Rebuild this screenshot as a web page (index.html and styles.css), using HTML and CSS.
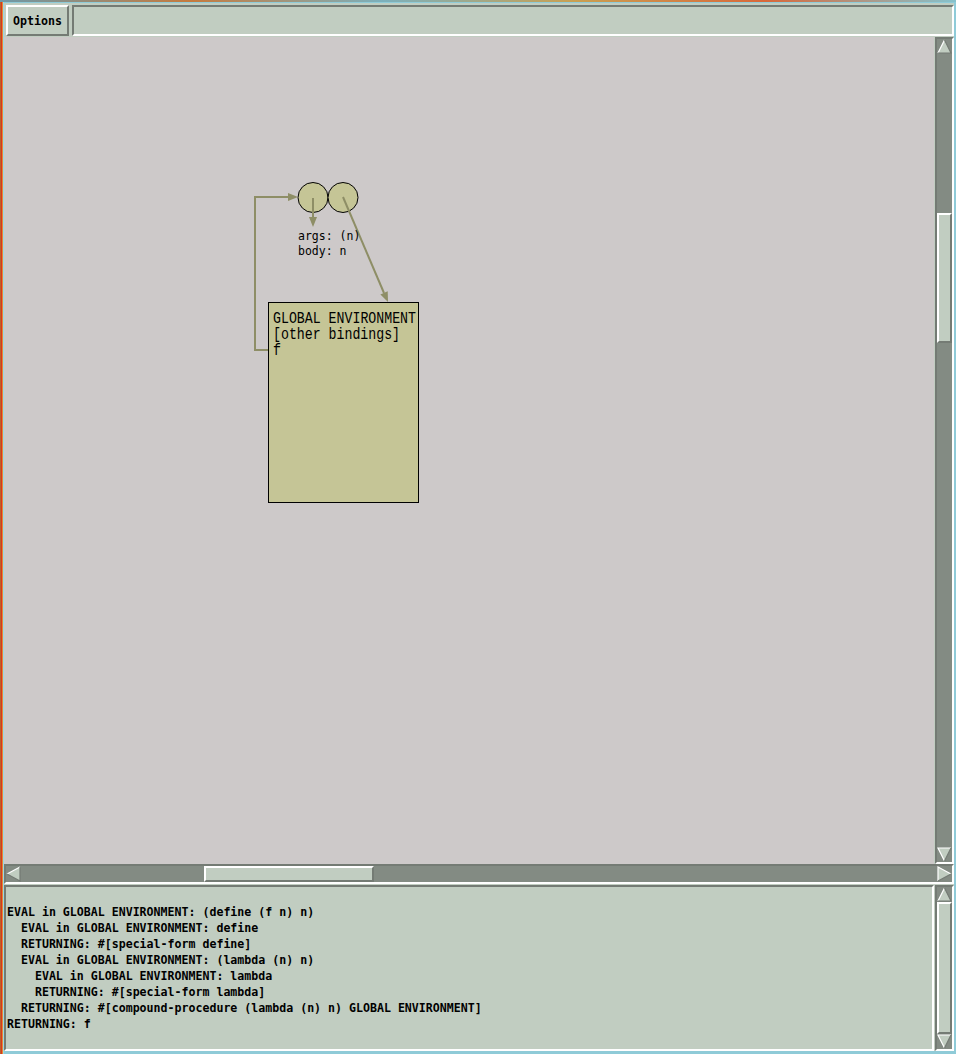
FILE: index.html
```html
<!DOCTYPE html>
<html>
<head>
<meta charset="utf-8">
<title>Environment diagram</title>
<link rel="stylesheet" href="styles.css">
</head>
<body>
<div class="window">
  <div class="topbar">
    <div class="btn">Options</div>
    <div class="entry"></div>
  </div>
  <div class="main">
    <div class="canvas">
      <svg class="diagram" width="930" height="827" viewBox="4 37 930 827">
        <rect class="frame" x="268.5" y="302.5" width="150" height="200"/>
        <circle class="cell" cx="313" cy="197.5" r="15"/>
        <circle class="cell" cx="343" cy="197.5" r="15"/>
        <line class="ptr" x1="313" y1="198" x2="313" y2="218"/>
        <polygon class="head" points="309,217 317,217 313,227"/>
        <line class="ptr" x1="343" y1="197" x2="384" y2="293"/>
        <polygon class="head" points="380.4,294.4 387.7,291.2 388,302"/>
        <polyline class="ptr" points="268,350 255,350 255,197 289,197"/>
        <polygon class="head" points="288,193 288,201 298,197"/>
        <text class="lbl" x="298" y="240">args: (n)</text>
        <text class="lbl" x="298" y="255">body: n</text>
        <text class="env" x="273" y="323" textLength="143" lengthAdjust="spacingAndGlyphs">GLOBAL ENVIRONMENT</text>
        <text class="env" x="273" y="339" textLength="127" lengthAdjust="spacingAndGlyphs">[other bindings]</text>
        <text class="env" x="273" y="355" textLength="8" lengthAdjust="spacingAndGlyphs">f</text>
      </svg>
    </div>
    <div class="vscroll">
      <svg class="arrow" width="15" height="15" viewBox="0 0 15 15"><polygon class="af" points="7.5,1 1,14 14,14"/><polyline class="al" points="1,14 7.5,1"/><polyline class="ad" points="7.5,1 14,14 1,14"/></svg>
      <div class="track"><div class="thumb vthumb"></div></div>
      <svg class="arrow" width="15" height="15" viewBox="0 0 15 15"><polygon class="af" points="1,1 14,1 7.5,14"/><polyline class="al" points="7.5,14 1,1 14,1"/><polyline class="ad" points="14,1 7.5,14"/></svg>
    </div>
  </div>
  <div class="hscroll">
    <svg class="arrow" width="15" height="16" viewBox="0 0 15 16"><polygon class="af" points="1,8 14,1 14,15"/><polyline class="al" points="1,8 14,1"/><polyline class="ad" points="14,1 14,15 1,8"/></svg>
    <div class="htrack"><div class="thumb hthumb"></div></div>
    <svg class="arrow" width="15" height="16" viewBox="0 0 15 16"><polygon class="af" points="1,1 14,8 1,15"/><polyline class="al" points="1,15 1,1 14,8"/><polyline class="ad" points="14,8 1,15"/></svg>
  </div>
  <div class="console">
<pre class="trace">EVAL in GLOBAL ENVIRONMENT: (define (f n) n)
  EVAL in GLOBAL ENVIRONMENT: define
  RETURNING: #[special-form define]
  EVAL in GLOBAL ENVIRONMENT: (lambda (n) n)
    EVAL in GLOBAL ENVIRONMENT: lambda
    RETURNING: #[special-form lambda]
  RETURNING: #[compound-procedure (lambda (n) n) GLOBAL ENVIRONMENT]
RETURNING: f</pre>
    <div class="vscroll">
      <svg class="arrow" width="15" height="15" viewBox="0 0 15 15"><polygon class="af" points="7.5,1 1,14 14,14"/><polyline class="al" points="1,14 7.5,1"/><polyline class="ad" points="7.5,1 14,14 1,14"/></svg>
      <div class="track"><div class="thumb fullthumb"></div></div>
      <svg class="arrow" width="15" height="15" viewBox="0 0 15 15"><polygon class="af" points="1,1 14,1 7.5,14"/><polyline class="al" points="7.5,14 1,1 14,1"/><polyline class="ad" points="14,1 7.5,14"/></svg>
    </div>
  </div>
</div>
</body>
</html>
```
FILE: styles.css
```css
* { box-sizing: border-box; }
html, body { margin: 0; padding: 0; }
body {
  width: 956px;
  height: 1054px;
  overflow: hidden;
  padding: 3px 2px 0 4px;
  background:
    linear-gradient(to right, #6f9aa8 0, #c57a3e 20%, #7cb0bc 40%, #c9a052 60%, #d8683a 80%, #86c2cc 100%) top left / 100% 2px no-repeat,
    linear-gradient(to right, #b9632a 0 1px, #d9361f 1px 2px, #e38a35 2px 3px, #9ed6e3 3px 4px, transparent 4px),
    #8fcbd8;
}
.window {
  width: 950px;
  height: 1048px;
  background: #c1cdc1;
  display: flex;
  flex-direction: column;
}
.topbar {
  height: 34px;
  display: flex;
  gap: 3px;
  padding: 2px 0 1px 2px;
}
.btn {
  width: 63px;
  border: 2px solid;
  border-color: #fff #747b74 #747b74 #fff;
  display: flex;
  align-items: center;
  justify-content: center;
  font: bold 11.6px "DejaVu Sans Mono", monospace;
  color: #000;
}
.entry {
  flex: 1;
  border: 2px solid;
  border-color: #747b74 #fff #fff #747b74;
}
.main {
  height: 827px;
  display: flex;
  gap: 1px;
}
.canvas {
  width: 930px;
  background: #cdc9c9;
  overflow: hidden;
}
.diagram { display: block; }
.frame { fill: #c5c596; stroke: #000; stroke-width: 1; }
.cell { fill: #c5c596; stroke: #000; stroke-width: 1; }
.ptr { stroke: #8e8e66; stroke-width: 2; fill: none; }
.head { fill: #8e8e66; }
.lbl { font: 11.5px "DejaVu Sans Mono", monospace; fill: #000; }
.env { font: 16px "Liberation Mono", monospace; fill: #000; }

.vscroll {
  width: 19px;
  border: 2px solid;
  border-color: #747b74 #fff #fff #747b74;
  background: #838b83;
  display: flex;
  flex-direction: column;
}
.arrow { display: block; flex: none; }
.af { fill: #c1cdc1; }
.al { fill: none; stroke: #fff; stroke-width: 1.2; }
.ad { fill: none; stroke: #747b74; stroke-width: 1.2; }
.track { flex: 1; display: flex; flex-direction: column; }
.thumb {
  background: #c1cdc1;
  border: 2px solid;
  border-color: #fff #747b74 #747b74 #fff;
}
.vthumb { margin-top: 159px; height: 130px; }
.fullthumb { flex: 1; }

.hscroll {
  height: 20px;
  border: 2px solid;
  border-color: #747b74 #fff #fff #747b74;
  background: #838b83;
  display: flex;
}
.htrack { flex: 1; display: flex; }
.hthumb { margin-left: 183px; width: 170px; }

.console {
  height: 166px;
  margin-top: 1px;
  display: flex;
  gap: 1px;
}
.trace {
  width: 930px;
  margin: 0;
  border: 2px solid;
  border-color: #747b74 #fff #fff #747b74;
  padding: 17px 0 0 1px;
  font: bold 11.6px/16px "DejaVu Sans Mono", monospace;
  color: #000;
  white-space: pre;
  overflow: hidden;
}
```
